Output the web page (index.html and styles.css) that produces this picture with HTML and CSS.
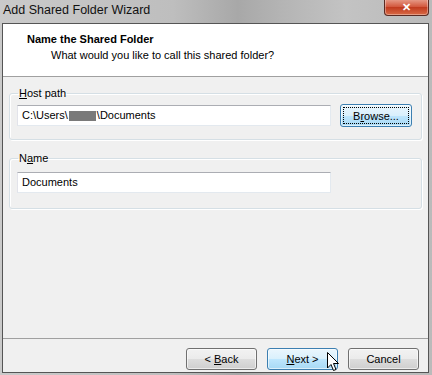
FILE: index.html
```html
<!DOCTYPE html>
<html lang="en">
<head>
    <meta charset="UTF-8">
    <title>Add Shared Folder Wizard</title>
    <link rel="stylesheet" href="styles.css">
</head>
<body>

<div class="window">
    <div class="titlebar">
        <span class="title">Add Shared Folder Wizard</span>
        <button class="close-btn">&#x2715;</button>
    </div>

    <div class="client">
        <div class="wizard-header">
            <div class="step-title">Name the Shared Folder</div>
            <div class="step-desc">What would you like to call this shared folder?</div>
        </div>

        <div class="wizard-body">
            <fieldset class="group">
                <legend><u>H</u>ost path</legend>
                <div class="row">
                    <div class="textbox">C:\Users\<span class="masked"></span>\Documents</div>
                    <button class="btn btn-focus">B<u>r</u>owse...</button>
                </div>
            </fieldset>

            <fieldset class="group group-name">
                <legend>N<u>a</u>me</legend>
                <div class="row">
                    <div class="textbox">Documents</div>
                </div>
            </fieldset>
        </div>

        <div class="wizard-footer">
            <button class="btn">&lt; <u>B</u>ack</button>
            <button class="btn btn-hover"><u>N</u>ext &gt;
                <svg class="mouse" width="13" height="20" viewBox="0 0 13 20">
                    <path d="M0.5 0.5 L0.5 16 L4 12.5 L6.5 18.5 L9 17.5 L6.5 11.5 L11.5 11.5 Z" fill="#fff" stroke="#000" stroke-width="1" stroke-linejoin="round"/>
                </svg>
            </button>
            <button class="btn">Cancel</button>
        </div>
    </div>
</div>

</body>
</html>
```

FILE: styles.css
```css
body {
    margin: 0;
    font-family: "Liberation Sans", Arial, sans-serif;
    font-size: 11px;
    color: #000;
    background: #c4c4c4;
}

.window {
    width: 432px;
    height: 375px;
    box-sizing: border-box;
    display: flex;
    flex-direction: column;
    background: linear-gradient(90deg, #cacaca 0%, #bebebe 40%, #a8a8a8 55%, #b4b4b4 65%, #c3c3c3 80%, #bababa 100%);
    padding: 0 3px 2px 2px;
}

.titlebar {
    height: 23px;
    display: flex;
    align-items: flex-start;
    justify-content: space-between;
}
.title {
    font-size: 12.5px;
    padding: 3px 0 0 1px;
    color: #111;
}
.close-btn {
    width: 45px;
    height: 17px;
    margin-top: -1px;
    border: 1px solid #5a2a22;
    border-top: none;
    border-radius: 0 0 4px 4px;
    background: linear-gradient(#e8a08e, #d2563b 50%, #c03a1e 51%, #d86a45);
    color: #fff;
    font-size: 11px;
    font-weight: bold;
    padding: 0;
    line-height: 15px;
    box-shadow: inset 0 0 0 1px rgba(255,255,255,0.35);
}

.client {
    flex: 1;
    display: flex;
    flex-direction: column;
    border: 1px solid #555;
    background: #f0f0f0;
}

.wizard-header {
    background: #fff;
    height: 53px;
    border-bottom: 1px solid #a0a0a0;
    padding: 8px 0 0 24px;
    box-sizing: border-box;
}
.step-title {
    font-weight: bold;
    line-height: 15px;
}
.step-desc {
    padding-left: 24px;
    line-height: 15px;
    margin-top: 1px;
}

.wizard-body {
    flex: 1;
    padding: 9px 6px 0 6px;
}

.group {
    border: 1px solid #d5dfe5;
    border-radius: 3px;
    box-shadow: 1px 1px 0 #fff inset, 1px 1px 0 #fff;
    margin: 0 0 11px 0;
    padding: 4px 7px 12px 7px;
}
.group legend {
    padding: 0 1px;
    margin-left: 1px;
    line-height: 14px;
}
.group-name {
    padding-top: 7px;
    padding-bottom: 15px;
}

.row {
    display: flex;
    align-items: center;
    gap: 9px;
}
.textbox {
    width: 314px;
    height: 21px;
    box-sizing: border-box;
    background: #fff;
    border: 1px solid #abadb3;
    border-color: #abadb3 #e3e9ef #e3e9ef #e2e3ea;
    padding: 2px 4px;
    line-height: 15px;
    display: flex;
    align-items: center;
}
.masked {
    display: inline-block;
    width: 27px;
    height: 10px;
    background: #7a7a7a;
    margin: 0 1px;
}

.btn {
    font-family: inherit;
    font-size: 11px;
    width: 71px;
    height: 22px;
    border: 1px solid #707070;
    border-radius: 3px;
    background: linear-gradient(#f2f2f2, #ebebeb 50%, #dddddd 51%, #cfcfcf);
    color: #000;
    padding: 0;
    box-shadow: inset 0 0 0 1px rgba(255,255,255,0.6);
}
.btn-focus {
    width: 72px;
    height: 23px;
    border-color: #3c7fb1;
    background: linear-gradient(#eaf6fd, #d9f0fc 50%, #bee6fd 51%, #a7d9f5);
    outline: 1px dotted #000;
    outline-offset: -4px;
}
.btn-hover {
    position: relative;
    border-color: #3c7fb1;
    background: linear-gradient(#eaf6fd, #d9f0fc 50%, #bee6fd 51%, #a7d9f5);
}

.mouse {
    position: absolute;
    left: 59px;
    top: 3px;
}

.wizard-footer {
    height: 34px;
    border-top: 1px solid #a0a0a0;
    display: flex;
    justify-content: flex-end;
    align-items: flex-start;
    gap: 10px;
    padding: 9px 9px 0 0;
    box-sizing: border-box;
}
```
